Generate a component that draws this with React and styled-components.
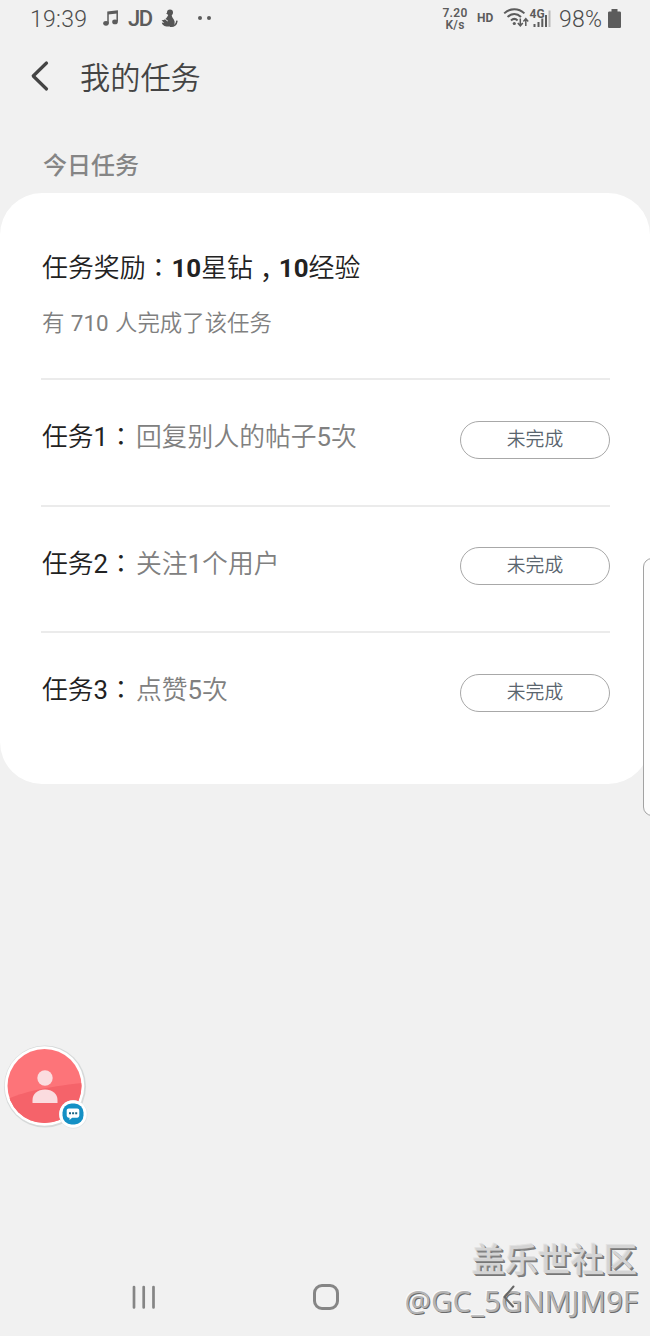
import styled, { createGlobalStyle } from 'styled-components';

const tasks = [
    { id: 1, label: "任务1", text: "回复别人的帖子5次", status: "未完成" },
    { id: 2, label: "任务2", text: "关注1个用户", status: "未完成" },
    { id: 3, label: "任务3", text: "点赞5次", status: "未完成" },
];

// digits are set a little heavier than the Chinese text around them
const withDigits = (text) => text.split(/(\d+)/).map((part, i) => (
    /^\d+$/.test(part) ? <DigitsStyled key={i}>{part}</DigitsStyled> : part
));

const StatusBar = () => {
    return (
        <StatusBarStyled>
            <ClockStyled>19:39</ClockStyled>
            <MusicStyled width="16" height="17" viewBox="0 0 16 17">
                <path d="M5 13V2.2L14.2 1v10.5" fill="none" stroke="#5c5c5c" strokeWidth="1.5" />
                <path d="M5 2.2 14.2 1v2.4L5 4.6z" fill="#5c5c5c" />
                <ellipse cx="3" cy="13.3" rx="2.8" ry="2.4" fill="#5c5c5c" />
                <ellipse cx="12" cy="11.9" rx="2.8" ry="2.4" fill="#5c5c5c" />
            </MusicStyled>
            <JdStyled>JD</JdStyled>
            <UcStyled width="17" height="19" viewBox="0 0 17 19" fill="#555">
                <circle cx="9" cy="3.4" r="3" />
                <path d="M7 3 5 4.5 7.5 5.5z" />
                <path d="M7.5 5.5h3.3c-.4 2 .8 3 2 5 1.6 2.8 1 5.4-1.2 7H5.4C2.6 17 1 15.4.8 13.4l2.4.6L.6 11.2C3.8 11 5 9.6 6.4 7.4z" />
                <path d="M9 17.3c4 .3 6.5-1.7 7-5.7" fill="none" stroke="#555" strokeWidth="1.5" />
                <path d="m4.3 10.3 2.5 1.7" stroke="#f1f1f1" strokeWidth="1" />
            </UcStyled>
            <DotsStyled>
                <DotStyled />
                <DotStyled />
            </DotsStyled>
            <SpeedStyled>
                <span>7.20</span>
                <span>K/s</span>
            </SpeedStyled>
            <HdStyled>HD</HdStyled>
            <SignalStyled width="50" height="24" viewBox="0 0 50 24">
                <g fill="none" stroke="#5c5c5c" strokeWidth="2">
                    <path d="M1.2 8.4C7 2.8 15.6 2.8 21.4 8.4" />
                    <path d="M4.6 12c4-3.9 9.4-3.9 13.4 0" />
                    <path d="M8 15.5c2-1.9 4.7-1.9 6.6 0" />
                </g>
                <circle cx="11.3" cy="18.5" r="1.6" fill="#5c5c5c" />
                <path d="M17.3 13.5v7M14.8 18l2.5 2.8 2.5-2.8M22.8 21v-7M20.4 16.4l2.4-2.8 2.4 2.8" fill="none" stroke="#5c5c5c" strokeWidth="1.5" />
                <text x="26.5" y="12.5" fontSize="12" fontWeight="700" fill="#5c5c5c">4G</text>
                <path d="M31.5 19v3M35.5 17v5M39.3 13.5V22M43 10v12" stroke="#5c5c5c" strokeWidth="2" />
                <path d="M46.5 5.5V22" stroke="#b9b9b9" strokeWidth="2" />
            </SignalStyled>
            <BatteryTextStyled>98%</BatteryTextStyled>
            <BatteryStyled width="13" height="19" viewBox="0 0 13 19">
                <path d="M3.5 0h6v2.5h2.2c.7 0 1.3.6 1.3 1.3v13.9c0 .7-.6 1.3-1.3 1.3H1.3C.6 19 0 18.4 0 17.7V3.8c0-.7.6-1.3 1.3-1.3h2.2z" fill="#5c5c5c" />
            </BatteryStyled>
        </StatusBarStyled>
    )
}

const Assistant = () => {
    return (
        <AssistantStyled width="92" height="92" viewBox="0 0 92 92">
            <defs>
                <clipPath id="avatar"><circle cx="44.5" cy="46" r="37" /></clipPath>
            </defs>
            <circle cx="45" cy="46.5" r="41" fill="#d6d9d9" />
            <circle cx="44.5" cy="46" r="39.8" fill="#fff" />
            <g clipPath="url(#avatar)">
                <rect width="92" height="92" fill="#fd7479" />
                <path d="M0 63C18 53 42 47 92 42v50H0z" fill="#f5636a" />
            </g>
            <circle cx="45" cy="38" r="7.7" fill="#fbdcdf" />
            <path d="M32.5 63v-3c0-6 5.2-10.5 12.5-10.5s12.5 4.5 12.5 10.5v3z" fill="#fbdcdf" />
            <circle cx="73.3" cy="74.5" r="14.2" fill="#e3e7e9" />
            <circle cx="73" cy="74" r="13.7" fill="#fff" />
            <rect x="62.5" y="63.5" width="21" height="21" rx="9" fill="#1490c5" />
            <path d="M68.8 68.5h8.4c1.2 0 2.1.9 2.1 2.1v5c0 1.2-.9 2.1-2.1 2.1h-5l-2.7 2.4v-2.4h-.7c-1.2 0-2.1-.9-2.1-2.1v-5c0-1.2.9-2.1 2.1-2.1z" fill="#fff" />
            <path d="M69 72.3h2v2h-2zM72.1 72.3h2v2h-2zM75.2 72.3h2v2h-2z" fill="#176484" />
        </AssistantStyled>
    )
}

const NavBar = () => {
    return (
        <NavBarStyled>
            <RecentStyled width="24" height="25" viewBox="0 0 24 25">
                <path d="M2 2v20.5M11.7 2v20.5M21.5 2v20.5" stroke="#858585" strokeWidth="2.7" strokeLinecap="round" />
            </RecentStyled>
            <HomeStyled />
            <NavBackStyled width="16" height="26" viewBox="0 0 16 26">
                <path d="M12.5 2.5 3.5 13l8.5 9.500" fill="none" stroke="#666" strokeWidth="2" strokeLinecap="round" />
            </NavBackStyled>
        </NavBarStyled>
    )
}

const App = () => {
    return (
        <ScreenStyled>
            <GlobalStyle />
            <StatusBar />
            <HeaderStyled>
                <BackStyled width="20" height="32" viewBox="0 0 20 32">
                    <path d="M16.5 3 3.2 16l13.3 13" fill="none" stroke="#444" strokeWidth="3.2" strokeLinecap="round" strokeLinejoin="round" />
                </BackStyled>
                <TitleStyled>我的任务</TitleStyled>
            </HeaderStyled>
            <SectionTitleStyled>今日任务</SectionTitleStyled>
            <CardStyled>
                <RewardStyled>
                    <h2>任务奖励：<b>10</b>星钻<CommaStyled>，</CommaStyled><b>10</b>经验</h2>
                    <p>{withDigits("有 710 人完成了该任务")}</p>
                </RewardStyled>
                {
                    tasks.map(task => (
                        <TaskStyled key={task.id}>
                            <TaskLabelStyled>{withDigits(task.label)}：</TaskLabelStyled>
                            <TaskTextStyled>{withDigits(task.text)}</TaskTextStyled>
                            <StatusButtonStyled>{task.status}</StatusButtonStyled>
                        </TaskStyled>
                    ))
                }
            </CardStyled>
            <EdgePanelStyled />
            <Assistant />
            <NavBar />
            <WatermarkStyled>
                <CommunityStyled>盖乐世社区</CommunityStyled>
                <AuthorStyled>@GC_5GNMJM9F</AuthorStyled>
            </WatermarkStyled>
        </ScreenStyled>
    )
}

const GlobalStyle = createGlobalStyle`
* {
    box-sizing: border-box;
}

body {
    margin: 0;
    background: #f1f1f1;
    font-family: Roboto, "Noto Sans CJK TC", "Noto Sans CJK SC", sans-serif;
}
`;

const ScreenStyled = styled.div`
position: relative;
width: 650px;
height: 1336px;
overflow: hidden;
background: #f1f1f1;
white-space: nowrap;
`;

const DigitsStyled = styled.span`
font-weight: 400;
`;

const StatusBarStyled = styled.div`
display: flex;
align-items: flex-start;
height: 40px;
padding-left: 30px;
color: #5c5c5c;

& > * {
    flex: none;
}
`;

const ClockStyled = styled.span`
width: 73px;
font-size: 23px;
font-weight: 350;
line-height: 40px;
letter-spacing: 0.3px;
color: #4c4c4c;
`;

const MusicStyled = styled.svg`
margin-top: 10px;
`;

const JdStyled = styled.span`
width: 25px;
margin-left: 9px;
font-size: 22px;
font-weight: 500;
letter-spacing: -1.5px;
line-height: 38px;
`;

const UcStyled = styled.svg`
margin: 9px 0 0 8px;
`;

const DotsStyled = styled.div`
display: flex;
gap: 5px;
margin: 16px 0 0 20px;
`;

const DotStyled = styled.i`
width: 4px;
height: 4px;
border-radius: 50%;
background: #5c5c5c;
`;

const SpeedStyled = styled.div`
display: flex;
flex-direction: column;
align-items: center;
width: 26px;
margin: 8px 0 0 231px;
font-size: 12px;
font-weight: 600;
line-height: 11.5px;
letter-spacing: 0.3px;
`;

const HdStyled = styled.span`
width: 18px;
margin-left: 9px;
font-size: 12px;
font-weight: 700;
line-height: 37px;
`;

const SignalStyled = styled.svg`
margin: 5px 0 0 8px;
`;

const BatteryTextStyled = styled.span`
width: 44px;
margin-left: 6px;
font-size: 23px;
font-weight: 350;
line-height: 40px;
letter-spacing: 0.2px;
color: #4c4c4c;
`;

const BatteryStyled = styled.svg`
margin: 9px 0 0 5px;
`;

const HeaderStyled = styled.header`
display: flex;
align-items: center;
height: 72px;
padding: 0 0 0 30px;
`;

const BackStyled = styled.svg`
margin-top: -1px;
`;

const TitleStyled = styled.h1`
margin: 5px 0 0 30px;
font-family: Roboto, "Noto Sans CJK SC", sans-serif;
font-size: 30.2px;
font-weight: 350;
line-height: 40px;
color: #444;
`;

const SectionTitleStyled = styled.div`
height: 81px;
padding: 37px 0 0 43px;
font-family: Roboto, "Noto Sans CJK SC", sans-serif;
font-size: 24px;
font-weight: 500;
line-height: 34px;
color: #858585;
`;

const CardStyled = styled.main`
height: 591px;
padding: 0 40px 0 41px;
border-radius: 42px;
background: #fff;
`;

const RewardStyled = styled.section`
height: 185px;
padding: 56px 0 0 1px;

h2 {
    height: 38px;
    margin: 0;
    font-size: 25.9px;
    font-weight: 350;
    line-height: 38px;
    color: #222;
}

b {
    font-weight: 700;
}

p {
    margin: 20px 0 0;
    font-size: 22.4px;
    font-weight: 350;
    line-height: 32px;
    word-spacing: 1px;
    color: #808080;
}
`;

const CommaStyled = styled.span`
display: inline-block;
width: 1em;
font-weight: 400;
line-height: 1;
vertical-align: -10px;
`;

const TaskStyled = styled.section`
display: flex;
align-items: flex-start;
height: 126.7px;
border-top: 2px solid #ebebeb;
font-size: 25.8px;
font-weight: 350;
line-height: 38px;
padding: 38px 0 0 1px;
`;

const TaskLabelStyled = styled.span`
width: 94px;
color: #222;
`;

const TaskTextStyled = styled.span`
flex: 1;
color: #808080;
`;

const StatusButtonStyled = styled.button`
width: 150px;
height: 38px;
margin: 2.6px 0 0;
padding: 0 0 4px;
border: 1px solid #a8a8a8;
border-radius: 19px;
background: #fff;
font-family: "Noto Sans CJK SC", sans-serif;
font-size: 18.8px;
font-weight: 350;
line-height: 30px;
color: #5a656e;
`;

const EdgePanelStyled = styled.div`
position: absolute;
top: 558px;
left: 643px;
width: 20px;
height: 258px;
border: 1px solid #a2a2a2;
border-radius: 9px;
background: #fcfcfc;
`;

const AssistantStyled = styled.svg`
position: absolute;
top: 1040px;
left: 0;
`;

const NavBarStyled = styled.nav`
position: absolute;
z-index: 1;
bottom: 0;
left: 0;
display: flex;
align-items: center;
width: 100%;
height: 78px;
padding-left: 132px;
`;

const RecentStyled = styled.svg`
flex: none;
`;

const HomeStyled = styled.i`
width: 26px;
height: 26px;
margin-left: 157px;
border: 3px solid #858585;
border-radius: 9px;
`;

const NavBackStyled = styled.svg`
margin-left: 162px;
`;

const WatermarkStyled = styled.div`
position: absolute;
right: 12px;
bottom: 14px;
display: flex;
flex-direction: column;
align-items: flex-end;
`;

const CommunityStyled = styled.div`
margin-right: 1px;
font-family: "Noto Sans CJK SC", sans-serif;
font-size: 33px;
font-weight: 500;
line-height: 44px;
color: #d4d4d4;
text-shadow: 1px 1px #8a8a8a, 2px 2px #777, -1px -1px #e2e2e2;
`;

const AuthorStyled = styled.div`
font-family: "Noto Sans", sans-serif;
font-size: 29.4px;
line-height: 42px;
color: #b4b4b4;
text-shadow: 1px 1px #6c6c6c, -1px -1px #fafafa;
`;

export default App;
